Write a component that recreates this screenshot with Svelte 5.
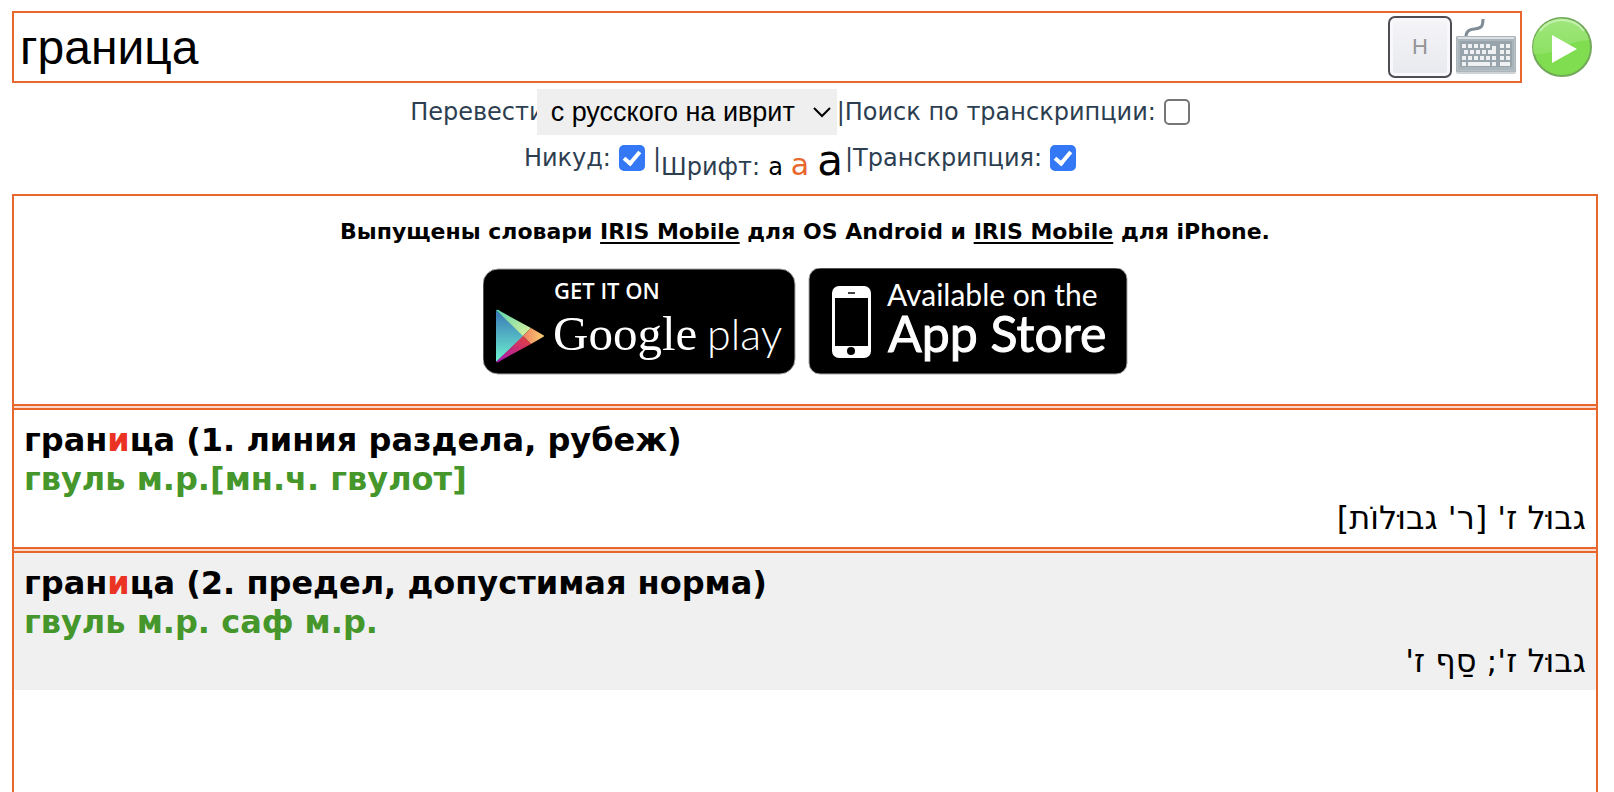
<script lang="ts">
	type Entry = {
		meaning: string;
		transcription: string;
		hebrew: string;
	};

	const entries: Entry[] = [
		{
			meaning: "(1. линия раздела, рубеж)",
			transcription: "гвуль м.р.[мн.ч. гвулот]",
			hebrew: "גבוּל ז' [ר' גבוּלוֹת]"
		},
		{
			meaning: "(2. предел, допустимая норма)",
			transcription: "гвуль м.р. саф м.р.",
			hebrew: "גבוּל ז'; סַף ז'"
		}
	];

	const sizes = ["small", "medium", "large"];

	let query = $state("граница");
	let direction = $state("ru-he");
	let byTranscription = $state(false);
	let nikud = $state(true);
	let transcription = $state(true);
	let size = $state("medium");
</script>

<div class="page">
	<form class="search" onsubmit={(e) => e.preventDefault()}>
		<div class="field">
			<input type="text" bind:value={query} aria-label="Слово" />
			<button class="key" type="button">H</button>
			<button class="keyboard" type="button" aria-label="Клавиатура">
				<svg width="64" height="62" viewBox="0 0 64 62">
					<path d="M13 21c0-4 1-6 4-7 3-2 7 0 11-3 2-2 2-4 2-8" fill="none" stroke="#7f8c95" stroke-width="3" />
					<rect x="3" y="22" width="60" height="36" rx="2" fill="#cfd3d6" />
					<rect x="3" y="20" width="60" height="36" rx="2" fill="#8e9ba3" />
					<rect x="4" y="21" width="58" height="34" rx="1" fill="#aab4bb" stroke="#c7ced2" />
					<path d="M5 22h56" stroke="#dde1e4" stroke-width="2" />
					<rect x="7" y="25" width="52" height="26" fill="#98a4ac" />
					<path d="M9 30h28M47 30h10" stroke="#eef0f1" stroke-width="4" stroke-dasharray="4 2" />
					<path d="M11 36h22M47 36h10" stroke="#eef0f1" stroke-width="4" stroke-dasharray="4 2" />
					<path d="M9 42h34M47 42h10" stroke="#eef0f1" stroke-width="4" stroke-dasharray="4 2" />
					<path d="M9 48h4M15 48h22M39 48h4M47 48h10" stroke="#eef0f1" stroke-width="4" />
					<path d="M39 30h4v8h-8v-4h4z" fill="#eef0f1" />
				</svg>
			</button>
		</div>
		<button class="go" type="submit" aria-label="Перевести">
			<svg width="62" height="62" viewBox="0 0 62 62">
				<defs>
					<linearGradient id="shine" x1="0" y1="0" x2="0" y2="1">
						<stop offset="0" stop-color="#a0e67d" />
						<stop offset="1" stop-color="#8de163" />
					</linearGradient>
				</defs>
				<circle cx="31" cy="31" r="29" fill="#7fdd4f" stroke="#73a95a" stroke-width="2" />
				<path d="M3 38a28 28 0 0 1 55-14q-17 1-29 9-12 6-26 5z" fill="url(#shine)" />
				<path d="M9 15q8-11 22-11t22 11" fill="none" stroke="#c5f0af" stroke-width="2" />
				<path d="M21 19v28l25-14z" fill="#fff" />
			</svg>
		</button>
	</form>

	<div class="options">
		<div class="row">
			<label for="direction">Перевести</label>
			<span class="select">
				<select id="direction" bind:value={direction}>
					<option value="ru-he">с русского на иврит</option>
					<option value="he-ru">с иврита на русский</option>
				</select>
				<svg class="chevron" width="18" height="12" viewBox="0 0 18 12">
					<path d="M1 2l8 8 8-8" fill="none" stroke="#000" stroke-width="2" />
				</svg>
			</span>
			<span>|</span>
			<label class="check">Поиск по транскрипции: <input type="checkbox" bind:checked={byTranscription} /></label>
		</div>
		<div class="row">
			<label class="check">Никуд: <input type="checkbox" bind:checked={nikud} /></label>
			<span class="bar">|</span>
			<div class="fonts">
				<span>Шрифт:</span>
				{#each sizes as s}
					<button type="button" class={s} class:active={size === s} onclick={() => (size = s)}>a</button>
				{/each}
			</div>
			<span>|</span>
			<label class="check">Транскрипция: <input type="checkbox" bind:checked={transcription} /></label>
		</div>
	</div>

	<main>
		<section class="promo">
			<p>
				Выпущены словари <a href="#android">IRIS Mobile</a> для OS Android и
				<a href="#iphone">IRIS Mobile</a> для iPhone.
			</p>
			<div class="badges">
				<a href="#android" aria-label="Google play">
					<svg width="313" height="107" viewBox="0 0 313 107">
						<defs>
							<linearGradient id="blue" x1="0" y1="0" x2="0" y2="1">
								<stop offset="0" stop-color="#3775b7" />
								<stop offset="1" stop-color="#6ff3cf" />
							</linearGradient>
							<linearGradient id="green" x1="0" y1="0" x2="1" y2="1">
								<stop offset="0" stop-color="#56d6ae" />
								<stop offset="1" stop-color="#e2f19b" />
							</linearGradient>
							<linearGradient id="red" x1="0" y1="1" x2="1" y2="0">
								<stop offset="0" stop-color="#a516b5" />
								<stop offset="1" stop-color="#e8433a" />
							</linearGradient>
							<linearGradient id="gold" x1="0" y1="0" x2="1" y2="0">
								<stop offset="0" stop-color="#f08163" />
								<stop offset="1" stop-color="#f8cf70" />
							</linearGradient>
						</defs>
						<rect x="0" y="1" width="312" height="105" rx="15" stroke="#a6a6a6" />
						<path d="M13 42l28 26-28 26z" fill="url(#blue)" />
						<path d="M13 42q2-1 4 1l31 17-8 8z" fill="url(#green)" />
						<path d="M13 94q2 1 4-1l31-17-8-8z" fill="url(#red)" />
						<path d="M48 60l12 7q2 1 0 2l-12 7-8-8z" fill="url(#gold)" />
						<text class="semibold" x="71" y="31" font-size="22">GET IT ON</text>
						<text class="serif" x="70" y="82" font-size="49">Google</text>
						<text class="light" x="224" y="82" font-size="43">play</text>
					</svg>
				</a>
				<a href="#iphone" aria-label="App Store">
					<svg width="320" height="107" viewBox="0 0 320 107">
						<rect x="1" y="0" width="318" height="106" rx="11" stroke="#a6a6a6" />
						<rect x="24" y="18" width="39" height="72" rx="7" fill="#fff" />
						<path d="M27 30h33v48H27z" />
						<path d="M40 25h7" stroke="#444" stroke-width="2" />
						<circle cx="43" cy="83" r="4" />
						<text class="sans" x="79" y="38" font-size="30">Available on the</text>
						<text class="sans thick" x="80" y="84" font-size="50">App Store</text>
					</svg>
				</a>
			</div>
		</section>

		{#each entries as entry}
			<article>
				<h2>гран<em>и</em>ца {entry.meaning}</h2>
				<p class="transcription">{entry.transcription}</p>
				<p class="hebrew" dir="rtl" lang="he">{entry.hebrew}</p>
			</article>
		{/each}
	</main>
</div>

<style>
	:global(body) {
		background: #fff;
	}

	.page {
		--accent: #e8672c;
		box-sizing: border-box;
		min-height: 100vh;
		display: flex;
		flex-direction: column;
		padding: 11px 16px 0 12px;
		font-family: Verdana, "DejaVu Sans", sans-serif;
		color: #000;
	}

	button {
		padding: 0;
		border: 0;
		background: none;
		font: inherit;
		color: inherit;
		cursor: pointer;
	}

	svg {
		display: block;
	}

	.search {
		display: flex;
		align-items: center;
		gap: 9px;
		padding-right: 5px;
	}

	.field {
		flex: 1;
		display: flex;
		align-items: center;
		gap: 1px;
		height: 68px;
		padding-right: 3px;
		border: 2px solid var(--accent);
	}

	.field input {
		flex: 1;
		min-width: 0;
		padding: 0 6px;
		border: 0;
		outline: 0;
		background: none;
		font: 48px "Liberation Sans", Arial, sans-serif;
		color: #000;
	}

	.key {
		width: 64px;
		height: 62px;
		border: 2px solid #4d4e54;
		border-radius: 7px;
		background: linear-gradient(#f5f5f8, #e8e9ee);
		box-shadow: inset 0 0 0 3px #f8f8fa;
		font: 22px "Liberation Sans", Arial, sans-serif;
		color: #949497;
	}

	.options {
		padding: 6px 10px 13px 0;
		font-size: 24px;
		color: #2c3e50;
	}

	.row {
		display: flex;
		align-items: center;
		justify-content: center;
		height: 46px;
	}

	.select {
		display: grid;
		align-items: center;
		margin-left: -8px;
	}

	select {
		grid-area: 1 / 1;
		appearance: none;
		height: 46px;
		padding: 0 36px 0 14px;
		border: 0;
		border-radius: 0;
		background: #efefef;
		font: 27px "Liberation Sans", Arial, sans-serif;
		color: #000;
	}

	.chevron {
		grid-area: 1 / 1;
		justify-self: end;
		margin-right: 6px;
		pointer-events: none;
	}

	.check {
		display: flex;
		align-items: center;
		gap: 8px;
	}

	.check input {
		appearance: none;
		width: 26px;
		height: 26px;
		margin: 0;
		border: 2px solid #767676;
		border-radius: 5px;
		box-sizing: border-box;
		display: grid;
		place-items: center;
	}

	.check input:checked {
		border-color: #3478f6;
		background: #3478f6;
	}

	.check input:checked::after {
		content: "";
		width: 6px;
		height: 13px;
		margin-bottom: 4px;
		border: solid #fff;
		border-width: 0 4px 4px 0;
		transform: rotate(40deg);
	}

	.bar {
		margin-left: 8px;
	}

	.fonts {
		display: flex;
		align-items: baseline;
		gap: 8px;
		padding: 4px 2px 0 0;
	}

	.fonts button {
		color: #000;
	}

	.fonts .active {
		color: var(--accent);
	}

	.small {
		font-size: 24px;
	}

	.medium {
		font-size: 30px;
	}

	.large {
		font-size: 42px;
	}

	main {
		flex: 1;
		border: 2px solid var(--accent);
		border-bottom: 0;
	}

	.promo {
		padding: 22px 0 29px;
	}

	.promo p {
		margin: 0 0 22px;
		font-size: 22px;
		font-weight: bold;
		line-height: 28px;
		text-align: center;
	}

	.promo p a {
		color: #000;
		text-underline-offset: 3px;
		text-decoration-thickness: 2px;
	}

	.badges {
		display: flex;
		justify-content: center;
		gap: 12px;
	}

	text {
		fill: #fff;
	}

	.sans {
		font-family: Lato, "Open Sans", sans-serif;
	}

	.thick {
		stroke: #fff;
		stroke-width: 1px;
	}

	.semibold {
		font-family: "Open Sans", sans-serif;
		font-weight: 600;
	}

	.serif {
		font-family: "Liberation Serif", serif;
	}

	.light {
		font-family: Lato, sans-serif;
		font-weight: 300;
	}

	/* the gradient is the pale fill between the two lines of the divider */
	article {
		padding: 11px 10px 9px;
		border-top: 6px double var(--accent);
		background: linear-gradient(#fbd9ca, #fbd9ca) top / 100% 6px no-repeat border-box;
		font-size: 32px;
		line-height: 39px;
	}

	article:nth-child(odd) {
		background-color: #f0f0f0;
	}

	h2,
	article p {
		margin: 0;
		font-size: inherit;
	}

	h2 em {
		font-style: normal;
		color: #ea3323;
	}

	.transcription {
		font-weight: bold;
		color: #45972b;
	}
</style>
